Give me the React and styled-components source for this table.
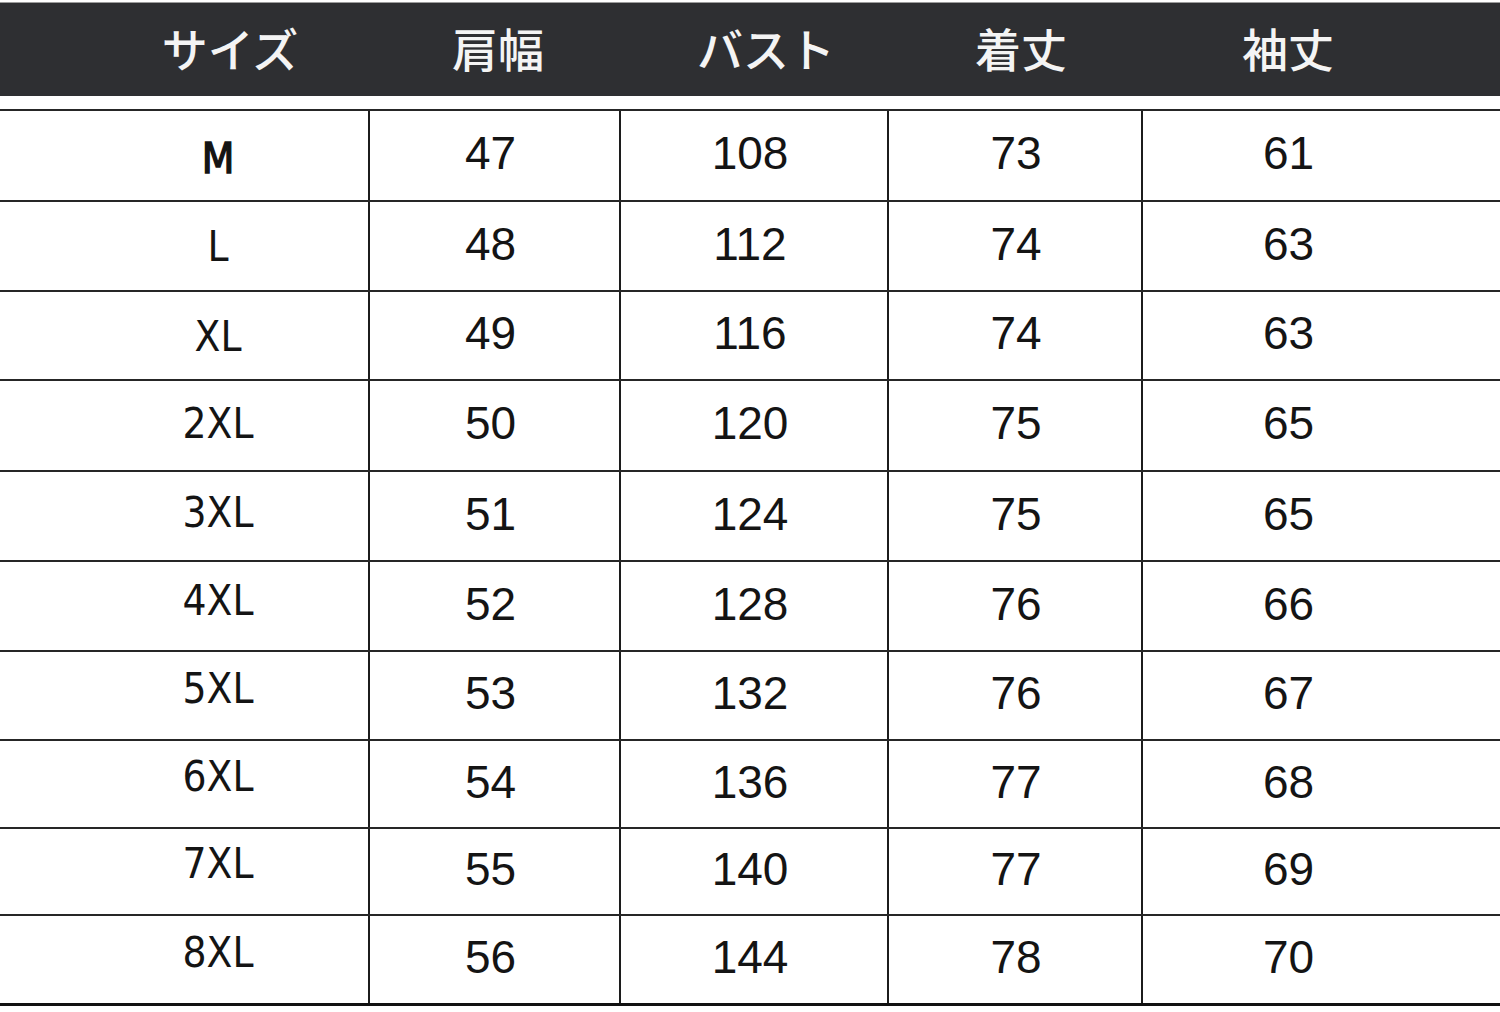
import React from "react";
import styled, { createGlobalStyle } from "styled-components";

const Global = createGlobalStyle`
  html, body { margin: 0; padding: 0; background: #fff; }
  body { width: 1500px; height: 1012px; overflow: hidden; }
  * { box-sizing: border-box; }
`;

const Page = styled.div`
  width: 1500px;
  height: 1012px;
  padding-top: 2px;
  background: #fff;
`;

const HeaderBar = styled.div`
  height: 94px;
  border-top: 1px solid #9c9c9c;
  background: #2e2f32;
  display: grid;
  grid-template-columns: 260px 276px 260px 250px 284px;
  padding-left: 100px;
  align-items: center;
`;

const HeaderCell = styled.div`
  text-align: center;
  color: #f4f4f4;
  font-family: "Noto Sans CJK JP", "Noto Sans", sans-serif;
  font-weight: 500;
  font-size: 46px;
  line-height: 1;
  padding-bottom: 6px;
`;

const Table = styled.div`
  margin-top: 13px;
  border-top: 2px solid #262626;
`;

const Row = styled.div`
  display: grid;
  grid-template-columns: 370px 251px 268px 254px 1fr;
  height: ${(p) => p.$h}px;
  border-bottom: ${(p) => (p.$last ? "3px solid #111" : "2px solid #262626")};
`;

const Cell = styled.div`
  display: flex;
  align-items: center;
  justify-content: center;
  border-right: ${(p) => (p.$edge ? "none" : "2px solid #1c1c1c")};
  padding-left: ${(p) => p.$pl || 0}px;
  padding-right: ${(p) => p.$pr || 0}px;
  padding-bottom: 5px;
  font-family: "Liberation Sans", Arial, sans-serif;
  font-size: 46px;
  color: #141414;
  line-height: 1;
`;

const SizeCell = styled(Cell)`
  padding-left: 68px;
  padding-right: 0;
  padding-top: ${(p) => Math.max(0, p.$off * 2)}px;
  padding-bottom: ${(p) => Math.max(0, -p.$off * 2)}px;
  font-family: "Liberation Sans Narrow", "DejaVu Sans Condensed", "Liberation Sans", sans-serif;
  font-size: 42px;
  font-weight: 400;
  -webkit-text-stroke: ${(p) => (p.$bold ? "1.4px #141414" : "0")};
`;

const headers = ["サイズ", "肩幅", "バスト", "着丈", "袖丈"];

const colPad = [
  { pl: 0, pr: 8 },
  { pl: 0, pr: 8 },
  { pl: 2, pr: 0 },
  { pl: 0, pr: 66 },
];

const rows = [
  { s: "M", v: [47, 108, 73, 61], h: 91, off: 3, b: true },
  { s: "L", v: [48, 112, 74, 63], h: 90, off: 0.5 },
  { s: "XL", v: [49, 116, 74, 63], h: 89, off: 1 },
  { s: "2XL", v: [50, 120, 75, 65], h: 91, off: -2 },
  { s: "3XL", v: [51, 124, 75, 65], h: 90, off: -3.5 },
  { s: "4XL", v: [52, 128, 76, 66], h: 90, off: -5.5 },
  { s: "5XL", v: [53, 132, 76, 67], h: 89, off: -7 },
  { s: "6XL", v: [54, 136, 77, 68], h: 88, off: -7.5 },
  { s: "7XL", v: [55, 140, 77, 69], h: 87, off: -8 },
  { s: "8XL", v: [56, 144, 78, 70], h: 90, off: -7 },
];

export default function App() {
  return (
    <Page>
      <Global />
      <HeaderBar>
        {headers.map((h) => (
          <HeaderCell key={h}>{h}</HeaderCell>
        ))}
      </HeaderBar>
      <Table>
        {rows.map((r, i) => (
          <Row key={r.s} $h={r.h} $last={i === rows.length - 1}>
            <SizeCell $off={r.off} $bold={r.b}>{r.s}</SizeCell>
            {r.v.map((n, j) => (
              <Cell key={j} $edge={j === 3} $pl={colPad[j].pl} $pr={colPad[j].pr}>
                {n}
              </Cell>
            ))}
          </Row>
        ))}
      </Table>
    </Page>
  );
}
